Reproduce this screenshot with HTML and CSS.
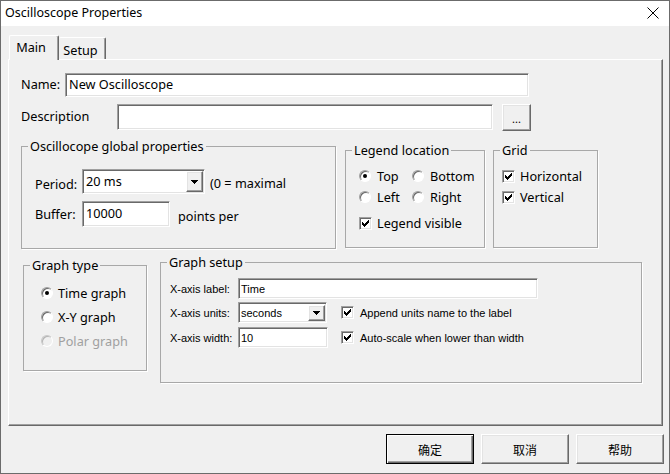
FILE: index.html
```html
<!DOCTYPE html>
<html>
<head>
<meta charset="utf-8">
<title>Oscilloscope Properties</title>
<link rel="stylesheet" href="styles.css">
</head>
<body>
<div class="window">
  <div class="titlebar">
    <span class="title">Oscilloscope Properties</span>
    <svg class="close" width="12" height="12" viewBox="0 0 12 12"><path d="M0.5 0.5 L11.5 11.5 M11.5 0.5 L0.5 11.5" stroke="#000" stroke-width="1" fill="none"/></svg>
  </div>
  <div class="client">
    <div class="tabs">
      <div class="tab tab-main">Main</div>
      <div class="tab tab-setup">Setup</div>
    </div>
    <div class="panel">
      <div class="row row-name">
        <span class="lbl lbl-name">Name:</span>
        <div class="edit edit-name">New Oscilloscope</div>
      </div>
      <div class="row row-desc">
        <span class="lbl lbl-desc">Description</span>
        <div class="edit edit-desc"></div>
        <div class="raised btn-dots">...</div>
      </div>
      <div class="groups groups-top">
        <div class="group g-global">
          <span class="legend">Oscillocope global properties</span>
          <div class="grow grow-period">
            <span class="glbl glbl-period">Period:</span>
            <div class="edit combo combo-period">
              <span class="combo-text">20 ms</span>
              <span class="raised drop drop-big"><svg width="7" height="4" viewBox="0 0 7 4"><path d="M0 0h7v1H0z M1 1h5v1H1z M2 2h3v1H2z M3 3h1v1H3z" fill="#000"/></svg></span>
            </div>
            <span class="note note-period">(0 = maximal</span>
          </div>
          <div class="grow grow-buffer">
            <span class="glbl">Buffer:</span>
            <div class="edit edit-buffer">10000</div>
            <span class="note note-buffer">points per</span>
          </div>
        </div>
        <div class="group g-legend">
          <span class="legend">Legend location</span>
          <div class="radio-grid">
            <div class="opt"><span class="radio on"></span><span>Top</span></div>
            <div class="opt"><span class="radio"></span><span>Bottom</span></div>
            <div class="opt"><span class="radio"></span><span>Left</span></div>
            <div class="opt"><span class="radio"></span><span>Right</span></div>
          </div>
          <div class="opt opt-visible"><span class="check"><svg width="11" height="11" viewBox="0 0 11 11"><path d="M2 4h1v3H2z M3 5h1v3H3z M4 6h1v3H4z M5 5h1v3H5z M6 4h1v3H6z M7 3h1v3H7z M8 2h1v3H8z" fill="#000"/></svg></span><span>Legend visible</span></div>
        </div>
        <div class="group g-grid">
          <span class="legend">Grid</span>
          <div class="opt"><span class="check"><svg width="11" height="11" viewBox="0 0 11 11"><path d="M2 4h1v3H2z M3 5h1v3H3z M4 6h1v3H4z M5 5h1v3H5z M6 4h1v3H6z M7 3h1v3H7z M8 2h1v3H8z" fill="#000"/></svg></span><span>Horizontal</span></div>
          <div class="opt opt-next"><span class="check"><svg width="11" height="11" viewBox="0 0 11 11"><path d="M2 4h1v3H2z M3 5h1v3H3z M4 6h1v3H4z M5 5h1v3H5z M6 4h1v3H6z M7 3h1v3H7z M8 2h1v3H8z" fill="#000"/></svg></span><span>Vertical</span></div>
        </div>
      </div>
      <div class="groups groups-bottom">
        <div class="group g-type">
          <span class="legend">Graph type</span>
          <div class="opt"><span class="radio on"></span><span>Time graph</span></div>
          <div class="opt opt-gap"><span class="radio"></span><span>X-Y graph</span></div>
          <div class="opt opt-gap disabled"><span class="radio"></span><span>Polar graph</span></div>
        </div>
        <div class="group g-setup">
          <span class="legend">Graph setup</span>
          <div class="srow">
            <span class="slbl">X-axis label:</span>
            <div class="edit sedit edit-xlabel">Time</div>
          </div>
          <div class="srow srow-2">
            <span class="slbl">X-axis units:</span>
            <div class="edit combo combo-units">
              <span class="combo-text">seconds</span>
              <span class="raised drop drop-small"><svg width="7" height="4" viewBox="0 0 7 4"><path d="M0 0h7v1H0z M1 1h5v1H1z M2 2h3v1H2z M3 3h1v1H3z" fill="#000"/></svg></span>
            </div>
            <div class="opt sopt sopt-units"><span class="check"><svg width="11" height="11" viewBox="0 0 11 11"><path d="M2 4h1v3H2z M3 5h1v3H3z M4 6h1v3H4z M5 5h1v3H5z M6 4h1v3H6z M7 3h1v3H7z M8 2h1v3H8z" fill="#000"/></svg></span><span>Append units name to the label</span></div>
          </div>
          <div class="srow srow-3">
            <span class="slbl">X-axis width:</span>
            <div class="edit sedit edit-xwidth">10</div>
            <div class="opt sopt sopt-width"><span class="check"><svg width="11" height="11" viewBox="0 0 11 11"><path d="M2 4h1v3H2z M3 5h1v3H3z M4 6h1v3H4z M5 5h1v3H5z M6 4h1v3H6z M7 3h1v3H7z M8 2h1v3H8z" fill="#000"/></svg></span><span>Auto-scale when lower than width</span></div>
          </div>
        </div>
      </div>
    </div>
    <div class="buttons">
      <div class="dlg-btn default">确定</div>
      <div class="dlg-btn raised">取消</div>
      <div class="dlg-btn raised">帮助</div>
    </div>
  </div>
</div>
</body>
</html>
```
FILE: styles.css
```css
* { box-sizing: border-box; }
html, body { margin: 0; padding: 0; }
body {
  width: 670px;
  height: 474px;
  overflow: hidden;
  background: #f0f0f0;
  font-family: "Noto Sans", "Liberation Sans", sans-serif;
  font-size: 12.7px;
  color: #000;
}
.window {
  width: 670px;
  height: 474px;
  border: 1px solid #6b6b6b;
  display: flex;
  flex-direction: column;
  background: #f0f0f0;
}
.titlebar {
  flex: none;
  height: 25px;
  background: #fff;
  display: flex;
  align-items: center;
  justify-content: space-between;
  padding: 0 10px 2px 4px;
}
.title { font-size: 12.5px; line-height: 16px; }
.close { margin-top: 1px; }
.client { flex: 1; display: flex; flex-direction: column; }

/* tabs */
.tabs {
  display: flex;
  align-items: flex-end;
  height: 24px;
  margin: 9px 0 0 8px;
}
.tab {
  background: #f0f0f0;
  border-top: 1px solid #fff;
  border-left: 1px solid #fff;
  border-right: 1px solid #696969;
  box-shadow: inset -1px 0 0 #a0a0a0;
  border-radius: 2px 2px 0 0;
  display: flex;
  align-items: center;
  justify-content: center;
  line-height: 16px;
}
.tab-main {
  width: 50px;
  height: 25px;
  margin-bottom: -1px;
  position: relative;
  z-index: 1;
  padding: 0 6px 2px 0;
}
.tab-setup {
  width: 47px;
  height: 22px;
  border-left: none;
  padding: 3px 3px 0 0;
}

/* panel */
.panel {
  width: 655px;
  height: 367px;
  margin-left: 7px;
  border-top: 1px solid #fff;
  border-left: 1px solid #fff;
  border-right: 1px solid #696969;
  border-bottom: 1px solid #696969;
  box-shadow: inset -1px -1px 0 #a0a0a0;
  padding: 13px 0 0 12px;
  display: flex;
  flex-direction: column;
  align-items: flex-start;
}
.row { display: flex; align-items: center; }
.row-name { height: 24px; }
.lbl-name { width: 44px; padding-bottom: 2px; }
.lbl-desc { width: 96px; line-height: 24px; }
.row-desc { margin-top: 7px; height: 27px; align-items: flex-start; }

.edit {
  background: #fff;
  border: 1px solid;
  border-color: #a0a0a0 #fff #fff #a0a0a0;
  box-shadow: inset 1px 1px 0 #696969, inset -1px -1px 0 #e3e3e3;
  display: flex;
  align-items: center;
  white-space: nowrap;
}
.raised {
  background: #f0f0f0;
  border: 1px solid;
  border-color: #fff #696969 #696969 #fff;
  box-shadow: inset -1px -1px 0 #a0a0a0, inset 1px 1px 0 #e3e3e3;
}
.edit-name { width: 464px; height: 24px; padding: 0 0 2px 3px; }
.edit-desc { width: 376px; height: 26px; }
.btn-dots {
  width: 29px;
  height: 27px;
  margin-left: 9px;
  display: flex;
  align-items: center;
  justify-content: center;
  font-size: 11px;
  padding-top: 2px;
}

/* groups */
.groups { display: flex; align-items: flex-start; }
.groups-top { margin-top: 15px; }
.groups-bottom { margin-top: 13px; }
.group {
  position: relative;
  border: 1px solid #a8a8a8;
  box-shadow: 1px 1px 0 #fff;
}
.legend {
  position: absolute;
  left: 6px;
  top: -9px;
  padding: 0 2px;
  background: #f0f0f0;
  line-height: 16px;
  white-space: nowrap;
}
.g-global { width: 315px; height: 103px; padding: 22px 0 0 13px; }
.g-legend { width: 140px; height: 98px; margin: 4px 0 0 9px; padding: 16px 0 0 13px; }
.g-grid { width: 105px; height: 98px; margin: 4px 0 0 8px; padding: 16px 0 0 8px; }
.g-type { width: 124px; height: 106px; margin: 3px 0 0 2px; padding: 18px 0 0 17px; }
.g-setup { width: 482px; height: 121px; margin-left: 13px; padding: 15px 0 0 9px; }

.grow { display: flex; align-items: center; }
.grow-period { height: 25px; }
.grow-buffer { height: 26px; margin-top: 7px; }
.glbl { width: 47px; }
.glbl-period { padding-top: 4px; }
.note-period { margin-left: 5px; padding-top: 3px; }
.note-buffer { margin-left: 8px; padding-top: 3px; }
.edit-buffer { width: 88px; height: 26px; padding: 0 0 2px 3px; }

.combo { padding: 0 1px 0 3px; }
.combo-text { flex: 1; }
.combo-period { width: 123px; height: 25px; }
.combo-period .combo-text { padding-bottom: 2px; }
.drop { display: flex; align-items: center; justify-content: center; }
.drop-big { width: 17px; height: 21px; }
.drop-small { width: 17px; height: 16px; }
.drop svg { display: block; }

/* options */
.opt { display: flex; align-items: center; height: 18px; gap: 5px; white-space: nowrap; }
.radio-grid {
  display: grid;
  grid-template-columns: 53px auto;
  grid-auto-rows: 18px;
  row-gap: 3px;
}
.radio-grid .opt { gap: 6px; }
.opt-visible { margin-top: 8px; }
.opt-next { margin-top: 3px; }
.g-type .opt { gap: 5px; }
.opt-gap { margin-top: 6px; }
.radio {
  flex: none;
  position: relative;
  width: 12px;
  height: 12px;
  border-radius: 50%;
  border: 1px solid;
  border-color: #a0a0a0 #fff #fff #a0a0a0;
  box-shadow: inset 1px 1px 0 #696969;
  background: #fff;
}
.radio.on::after {
  content: "";
  position: absolute;
  left: 3px;
  top: 3px;
  width: 4px;
  height: 4px;
  border-radius: 50%;
  background: #000;
}
.disabled { color: #a0a0a0; }
.disabled .radio { background: #f0f0f0; border-color: #c8c8c8 #fff #fff #c8c8c8; box-shadow: inset 1px 1px 0 #b4b4b4; }
.check {
  flex: none;
  width: 13px;
  height: 13px;
  border: 1px solid;
  border-color: #a0a0a0 #fff #fff #a0a0a0;
  box-shadow: inset 1px 1px 0 #696969, inset -1px -1px 0 #e3e3e3;
  background: #fff;
  display: flex;
}
.check svg { display: block; }

/* graph setup */
.srow {
  display: flex;
  align-items: center;
  height: 21px;
  font-family: "Liberation Sans", Arial, sans-serif;
  font-size: 11px;
}
.srow-2 { margin-top: 3px; }
.srow-3 { margin-top: 4px; }
.slbl { width: 68px; }
.sedit { padding-left: 2px; }
.edit-xlabel { width: 300px; height: 21px; }
.edit-xwidth { width: 90px; height: 21px; }
.combo-units { width: 89px; height: 21px; padding-left: 2px; }
.sopt-units { margin-left: 14px; gap: 6px; }
.sopt-width { margin-left: 13px; gap: 6px; }

/* dialog buttons */
.buttons {
  display: flex;
  justify-content: flex-end;
  gap: 7px;
  margin: 8px 5px 0 0;
}
.dlg-btn {
  width: 88px;
  height: 30px;
  display: flex;
  align-items: center;
  justify-content: center;
  font-family: "Noto Sans CJK SC", "Noto Sans", sans-serif;
  font-size: 12px;
}
.default {
  background: #f0f0f0;
  border: 1px solid #000;
  box-shadow: inset 1px 1px 0 #fff, inset -1px -1px 0 #696969, inset -2px -2px 0 #a0a0a0;
}
```
